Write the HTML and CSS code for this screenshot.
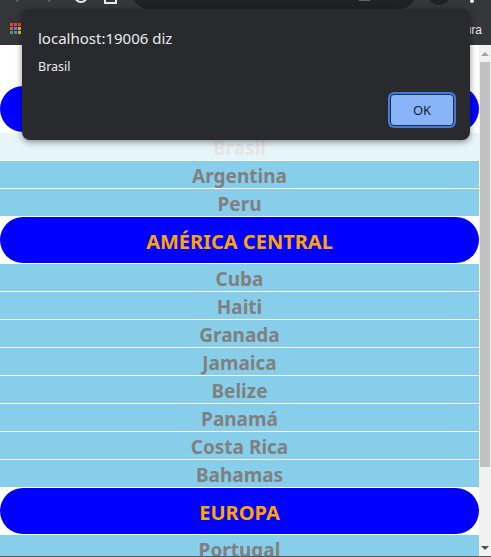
FILE: index.html
```html
<!DOCTYPE html>
<html lang="pt-BR">
<head>
<meta charset="utf-8">
<title>Países</title>
<link rel="stylesheet" href="styles.css">
</head>
<body>
<div class="browser">
  <header class="chrome">
    <div class="toolbar">
      <span class="tb-icon tb-back"></span>
      <span class="tb-icon tb-fwd"></span>
      <span class="tb-icon tb-reload"></span>
      <span class="tb-icon tb-home"></span>
      <div class="omnibox">
        <span class="omni-info"></span>
        <span class="omni-spacer"></span>
        <span class="omni-icon"></span>
        <span class="omni-icon omni-star"></span>
      </div>
      <span class="tb-profile"></span>
      <span class="tb-menu"></span>
    </div>
    <div class="bookmarks">
      <svg class="apps" width="12" height="12" viewBox="0 0 12 12">
        <rect x="0" y="0" width="3" height="3" fill="#ea4335"/>
        <rect x="4" y="0" width="3" height="3" fill="#ea4335"/>
        <rect x="8" y="0" width="3" height="3" fill="#ea4335"/>
        <rect x="0" y="4" width="3" height="3" fill="#e8542f"/>
        <rect x="4" y="4" width="3" height="3" fill="#4285f4"/>
        <rect x="8" y="4" width="3" height="3" fill="#fbbc05"/>
        <rect x="0" y="8" width="3" height="3" fill="#34a853"/>
        <rect x="4" y="8" width="3" height="3" fill="#4285f4"/>
        <rect x="8" y="8" width="3" height="3" fill="#fbbc05"/>
      </svg>
      <span class="bm-spacer"></span>
      <span class="bm-reading">Lista de leitura</span>
    </div>
  </header>

  <div class="viewport">
    <main class="page">
      <div class="list">
        <div class="section">AMÉRICA DO SUL</div>
        <div class="item pressed">Brasil</div>
        <div class="item">Argentina</div>
        <div class="item">Peru</div>
        <div class="section">AMÉRICA CENTRAL</div>
        <div class="item">Cuba</div>
        <div class="item">Haiti</div>
        <div class="item">Granada</div>
        <div class="item">Jamaica</div>
        <div class="item">Belize</div>
        <div class="item">Panamá</div>
        <div class="item">Costa Rica</div>
        <div class="item">Bahamas</div>
        <div class="section">EUROPA</div>
        <div class="item">Portugal</div>
        <div class="item">Espanha</div>
        <div class="item">França</div>
      </div>
    </main>
    <div class="scrollbar">
      <span class="sb-arrow sb-up"></span>
      <div class="sb-track"><div class="sb-thumb"></div></div>
      <span class="sb-arrow sb-down"></span>
    </div>
  </div>
  <div class="bottom-line"></div>

  <div class="dialog" role="alertdialog">
    <div class="dlg-title">localhost:19006 diz</div>
    <div class="dlg-msg">Brasil</div>
    <div class="dlg-actions">
      <button class="dlg-ok">OK</button>
    </div>
  </div>
</div>
</body>
</html>
```

FILE: styles.css
```css
html, body {
  margin: 0;
  padding: 0;
}
body {
  width: 491px;
  height: 557px;
  overflow: hidden;
  background: #ffffff;
  font-family: "Noto Sans", "Open Sans", "DejaVu Sans", sans-serif;
}
.browser {
  position: relative;
  width: 491px;
  height: 557px;
  display: flex;
  flex-direction: column;
}

/* ---------- browser chrome ---------- */
.chrome {
  height: 45px;
  background: #35363a;
  display: flex;
  flex-direction: column;
  flex-shrink: 0;
}
.toolbar {
  height: 12px;
  display: flex;
  align-items: flex-start;
}
.tb-icon {
  display: block;
}
.tb-back {
  margin-left: 14px;
  width: 8px;
  height: 8px;
  border-bottom: 2px solid #5f6064;
  transform: rotate(45deg);
  margin-top: -9px;
}
.tb-fwd {
  margin-left: 22px;
  width: 8px;
  height: 8px;
  border-bottom: 2px solid #5f6064;
  transform: rotate(-45deg);
  margin-top: -9px;
}
.tb-reload {
  margin-left: 22px;
  width: 10px;
  height: 10px;
  border-radius: 50%;
  border: 2px solid #e8eaed;
  margin-top: -11px;
}
.tb-home {
  margin-left: 16px;
  width: 9px;
  height: 10px;
  border: 2px solid #e8eaed;
  margin-top: -10px;
}
.omnibox {
  margin-left: 16px;
  width: 282px;
  height: 30px;
  margin-top: -21px;
  background: #202124;
  border-radius: 15px;
  display: flex;
  align-items: flex-end;
  padding: 0 18px 0 14px;
  box-sizing: border-box;
}
.omni-info {
  width: 8px;
  height: 8px;
  border-radius: 50%;
  border: 2px solid #5f6368;
  margin-bottom: 9px;
}
.omni-spacer { flex: 1; }
.omni-icon {
  width: 9px;
  height: 9px;
  border: 1px solid #5f6368;
  margin-bottom: 8px;
  margin-right: 18px;
}
.omni-star {
  margin-right: 0;
  border-radius: 2px;
  transform: rotate(45deg);
  width: 7px;
  height: 7px;
  margin-bottom: 10px;
}
.tb-profile {
  margin-left: 13px;
  width: 22px;
  height: 22px;
  border-radius: 50%;
  background: #202124;
  margin-top: -17px;
  position: relative;
}
.tb-profile::after {
  content: "";
  position: absolute;
  left: 5px;
  right: 5px;
  bottom: 6px;
  height: 3px;
  background: #e8eaed;
}
.tb-menu {
  margin-left: 20px;
  width: 4px;
  height: 4px;
  border-radius: 50%;
  background: #e8eaed;
  margin-top: -1px;
}
.bookmarks {
  flex: 1;
  display: flex;
  align-items: center;
  padding: 0 9px 0 10px;
}
.apps {
  display: block;
  margin-top: 1px;
}
.bm-spacer { flex: 1; }
.bm-reading {
  color: #e8eaed;
  font-family: "Liberation Sans", "Noto Sans", sans-serif;
  font-size: 12px;
  white-space: nowrap;
  margin-top: 2px;
}

/* ---------- page ---------- */
.viewport {
  flex: 1;
  display: flex;
  min-height: 0;
}
.page {
  flex: 1;
  background: #ffffff;
  overflow: hidden;
}
.list {
  padding-top: 41px;
  display: flex;
  flex-direction: column;
  gap: 1px;
}
.section {
  height: 46px;
  flex-shrink: 0;
  background: #0000ff;
  border-radius: 23px;
  color: #ffa500;
  font-weight: 700;
  font-size: 20px;
  display: flex;
  align-items: center;
  justify-content: center;
  padding-top: 2px;
  box-sizing: border-box;
}
.item {
  height: 27px;
  flex-shrink: 0;
  background: #87ceeb;
  color: #808080;
  font-weight: 700;
  font-size: 19px;
  display: flex;
  align-items: center;
  justify-content: center;
  padding-top: 2px;
  box-sizing: border-box;
  overflow: hidden;
}
.item.pressed {
  opacity: 0.2;
}

/* ---------- scrollbar ---------- */
.scrollbar {
  width: 12px;
  flex-shrink: 0;
  background: #f1f1f1;
  display: flex;
  flex-direction: column;
  align-items: center;
}
.sb-arrow {
  width: 0;
  height: 0;
  border-left: 4px solid transparent;
  border-right: 4px solid transparent;
  margin: 7px 0 6px;
}
.sb-up { border-bottom: 4px solid #a3a3a3; }
.sb-down { border-top: 4px solid #505050; margin: 5px 0 7px; }
.sb-track {
  flex: 1;
  width: 100%;
  display: flex;
  justify-content: center;
}
.sb-thumb {
  width: 10px;
  height: 405px;
  background: #c1c1c1;
}
.bottom-line {
  height: 1px;
  background: #5a5a5a;
  position: absolute;
  left: 0;
  right: 0;
  bottom: 0;
}

/* ---------- alert dialog ---------- */
.dialog {
  position: absolute;
  left: 22px;
  top: 9px;
  width: 448px;
  height: 131px;
  box-sizing: border-box;
  background: #292a2d;
  border-radius: 8px;
  box-shadow: 0 2px 6px rgba(0, 0, 0, 0.45);
  padding: 20px 16px 0 16px;
  display: flex;
  flex-direction: column;
  font-family: "Noto Sans", "Open Sans", sans-serif;
  color: #e8eaed;
}
.dlg-title {
  font-size: 15px;
  line-height: 18px;
}
.dlg-msg {
  margin-top: 12px;
  font-size: 12.5px;
  line-height: 16px;
}
.dlg-actions {
  display: flex;
  justify-content: flex-end;
  margin-top: 19px;
}
.dlg-ok {
  width: 64px;
  height: 32px;
  box-sizing: border-box;
  background: #8ab4f8;
  border: 1px solid #292a2d;
  border-radius: 4px;
  box-shadow: 0 0 0 2px #3b7be3;
  color: #202124;
  font-family: "Noto Sans", "Open Sans", sans-serif;
  font-size: 13px;
  padding: 0;
}
```
